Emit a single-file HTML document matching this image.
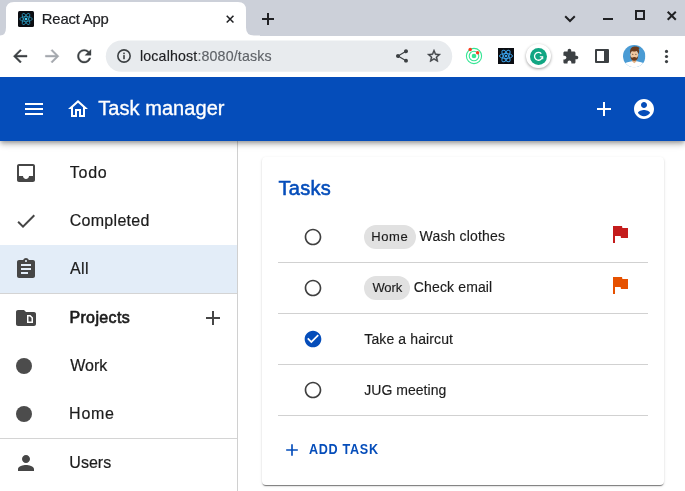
<!DOCTYPE html>
<html>
<head>
<meta charset="utf-8">
<title>React App</title>
<style>
*{box-sizing:border-box;margin:0;padding:0}
html,body{width:685px;height:491px;overflow:hidden;background:#fff;font-family:"Liberation Sans",sans-serif;color:#1f1f1f}
body{position:relative}
.abs{position:absolute}
svg{display:block;position:absolute;overflow:visible}
/* browser chrome */
#tabstrip{left:0;top:0;width:685px;height:36px;background:#ccd0d9}
#tab{left:0;top:0;width:260px;height:36px}
#tabtitle{top:10.8px;font-size:14.8px;line-height:16px;color:#202124;white-space:nowrap;-webkit-text-stroke:.2px #202124}
#toolbar{left:0;top:35.5px;width:685px;height:42px;background:#fff}
#pill{left:106px;top:41px;width:346px;height:30.5px;border-radius:15.25px;background:#eef0f4}
#url{top:48px;font-size:14.2px;line-height:16px;color:#202124;white-space:nowrap;-webkit-text-stroke:.15px}
#url span{color:#5f6368}
/* app */
#app{left:0;top:77px;width:685px;height:414px;overflow:hidden}
#appin{left:0;top:-77px;width:685px;height:491px}
#appbar{left:0;top:77px;width:685px;height:64px;background:#054dba;box-shadow:0 2px 4px -1px rgba(0,0,0,.28),0 4px 5px 0 rgba(0,0,0,.14),0 1px 10px 0 rgba(0,0,0,.12);z-index:5}
#apptitle{top:96.2px;font-size:20px;line-height:24px;color:#fff;white-space:nowrap;z-index:6;-webkit-text-stroke:.35px #fff}
.ab{z-index:6}
#drawer{left:0;top:141px;width:238px;height:350px;background:#fff;border-right:1px solid #d0d0d0}
.sel{left:0;top:245px;width:237px;height:48px;background:#e3edf8}
.hr{left:0;width:237px;height:1px;background:#d4d4d4}
.nav{font-size:16px;line-height:20px;color:#1c1c1c;white-space:nowrap;-webkit-text-stroke:.2px #1c1c1c}
#main{left:238px;top:141px;width:447px;height:350px;background:#fff}
#card{left:262px;top:157px;width:402px;height:328px;background:#fff;border-radius:4px;box-shadow:0 2px 1px -1px rgba(0,0,0,.38),0 1px 1px 0 rgba(0,0,0,.16),0 1px 3px 0 rgba(0,0,0,.13)}
#tasks{top:176.4px;font-size:20px;line-height:24px;color:#054dba;white-space:nowrap;-webkit-text-stroke:.55px #054dba}
.row{left:278px;width:370px;height:1px;background:#d1d1d1}
.t{font-size:14px;line-height:18px;color:#1c1c1c;white-space:nowrap;-webkit-text-stroke:.15px #1c1c1c}
.chip{height:24px;border-radius:12px;background:#e1e1e1;font-size:13px;line-height:24px;color:#1c1c1c;text-align:center;white-space:nowrap}
#add{top:440.4px;font-size:14px;line-height:18px;color:#054dba;white-space:nowrap;font-weight:bold;transform:scaleX(.9);transform-origin:0 0}
.ct{font-size:13px;line-height:24px;color:#1c1c1c;white-space:nowrap;-webkit-text-stroke:.15px #1c1c1c}
#txt{left:0;top:0;width:685px;height:491px;will-change:transform;z-index:10}
/*TUNE*/
#n1{left:69.80px;letter-spacing:0.759px}
#n2{left:69.66px;letter-spacing:0.298px}
#n3{left:69.90px;letter-spacing:0.499px}
#n4{left:69.39px;letter-spacing:0.371px}
#n5{left:70.32px;letter-spacing:-0.072px}
#n6{left:69.10px;letter-spacing:0.732px}
#n7{left:69.32px;letter-spacing:0.027px}
#t1{left:419.57px;letter-spacing:0.171px}
#t2{left:413.78px;letter-spacing:0.144px}
#t3{left:364.30px;letter-spacing:0.115px}
#t4{left:364.22px;letter-spacing:0.034px}
#c1{left:371.35px;letter-spacing:0.550px}
#c2{left:372.38px;letter-spacing:-0.074px}
#add{left:309.39px;letter-spacing:0.767px}
#tasks{left:278.51px;letter-spacing:0.263px}
#apptitle{left:98.14px;letter-spacing:0.072px}
#tabtitle{left:41.80px;letter-spacing:-0.166px}
#url{left:140.00px;letter-spacing:0.157px}
/*ENDTUNE*/
</style>
</head>
<body>
<!-- BROWSER -->
<div class="abs" id="tabstrip"></div>
<svg id="tab" viewBox="0 0 260 36"><path d="M0 36 L0 35.5 Q6 35.5 6 27.5 L6 10 Q6 2 14 2 L238 2 Q246 2 246 10 L246 27.5 Q246 35.5 254 35.5 L260 35.500 L260 36 Z" fill="#fff"/></svg>
<!-- favicon -->
<svg style="left:18px;top:11px" width="16" height="16" viewBox="0 0 16 16"><rect width="16" height="16" rx="1.5" fill="#0b0d12"/><g fill="none" stroke="#2b9fc6" stroke-width=".75"><ellipse cx="8" cy="8" rx="6.3" ry="2.4"/><ellipse cx="8" cy="8" rx="6.3" ry="2.4" transform="rotate(60 8 8)"/><ellipse cx="8" cy="8" rx="6.3" ry="2.4" transform="rotate(120 8 8)"/></g><circle cx="8" cy="8" r="1.35" fill="#45cdf5"/></svg>

<!-- tab close / new tab -->
<svg style="left:225.900px;top:14.800px" width="8.200" height="8.200" viewBox="0 0 9 9"><path d="M.8.8 8.2 8.2M8.2.8.8 8.2" stroke="#202124" stroke-width="1.7" fill="none"/></svg>
<svg style="left:261.5px;top:13px" width="12" height="12" viewBox="0 0 12 12"><path d="M6 0v12M0 6h12" stroke="#202124" stroke-width="2" fill="none"/></svg>
<!-- window controls -->
<svg style="left:564px;top:15px" width="12" height="8" viewBox="0 0 12 8"><path d="M1.2 1.3 6 6 10.8 1.3" stroke="#202124" stroke-width="2" fill="none"/></svg>
<div class="abs" style="left:603px;top:18px;width:10px;height:2px;background:#202124"></div>
<div class="abs" style="left:635px;top:10px;width:10px;height:10px;border:2px solid #202124"></div>
<svg style="left:667px;top:10.5px" width="9.5" height="9.5" viewBox="0 0 9.5 9.5"><path d="M.7.7 8.8 8.8M8.8.7.7 8.8" stroke="#202124" stroke-width="2" fill="none"/></svg>

<div class="abs" id="toolbar"></div>
<!-- nav buttons -->
<svg style="left:9.8px;top:45.7px" width="20.4" height="20.4" viewBox="0 0 24 24"><path d="M20 11H7.83l5.59-5.59L12 4l-8 8 8 8 1.41-1.41L7.83 13H20v-2z" fill="#3c4043" stroke="#3c4043" stroke-width=".5"/></svg>
<svg style="left:41.8px;top:45.7px" width="20.4" height="20.4" viewBox="0 0 24 24"><path d="M4 11h12.17l-5.59-5.59L12 4l8 8-8 8-1.41-1.41L16.17 13H4v-2z" fill="#a4a8ad" stroke="#a4a8ad" stroke-width=".5"/></svg>
<svg style="left:73.8px;top:45.7px" width="20.4" height="20.4" viewBox="0 0 24 24"><path d="M17.65 6.35C16.2 4.9 14.21 4 12 4c-4.42 0-7.99 3.58-7.99 8s3.57 8 7.99 8c3.73 0 6.84-2.55 7.73-6h-2.08c-.82 2.33-3.04 4-5.65 4-3.31 0-6-2.69-6-6s2.69-6 6-6c1.66 0 3.14.69 4.22 1.78L13 11h7V4l-2.35 2.35z" fill="#3c4043" stroke="#3c4043" stroke-width=".4"/></svg>
<svg style="left:100px;top:36px" width="360" height="40" viewBox="0 0 360 40"><rect x="5.800" y="4.600" width="346.400" height="31.100" rx="15.550" fill="#e8ebee"/></svg>
<!-- info icon -->
<svg style="left:116.100px;top:47.600px" width="16" height="16" viewBox="0 0 16 16"><circle cx="8" cy="8" r="6.150" fill="none" stroke="#3c4043" stroke-width="1.600"/><rect x="7.200" y="7.100" width="1.600" height="4.100" fill="#3c4043"/><rect x="7.200" y="4.600" width="1.600" height="1.600" fill="#3c4043"/></svg>

<!-- share -->
<svg style="left:394px;top:48px" width="16" height="16" viewBox="0 0 24 24"><path d="M18 16.08c-.76 0-1.44.3-1.96.77L8.91 12.7c.05-.23.09-.46.09-.7s-.04-.47-.09-.7l7.05-4.11c.54.5 1.25.81 2.04.81 1.66 0 3-1.34 3-3s-1.34-3-3-3-3 1.34-3 3c0 .24.04.47.09.7L8.04 9.81C7.5 9.31 6.79 9 6 9c-1.660 0-3 1.340-3 3s1.340 3 3 3c.79 0 1.500-.31 2.040-.81l7.120 4.160c-.05.21-.08.43-.08.650 0 1.610 1.310 2.920 2.920 2.920 1.610 0 2.920-1.310 2.920-2.920s-1.310-2.920-2.920-2.920z" fill="#3c4043"/></svg>
<!-- star -->
<svg style="left:426px;top:48px" width="16" height="16" viewBox="0 0 24 24"><path d="M22 9.240l-7.190-.62L12 2 9.190 8.630 2 9.240l5.460 4.730L5.820 21 12 17.270 18.180 21l-1.630-7.030L22 9.240zM12 15.400l-3.760 2.270 1-4.280-3.320-2.880 4.380-.38L12 6.100l1.710 4.040 4.380.38-3.320 2.880 1 4.280L12 15.400z" fill="#3c4043" stroke="#3c4043" stroke-width=".600"/></svg>
<!-- ext 1: green rings -->
<svg style="left:465px;top:47px" width="18" height="18" viewBox="0 0 18 18"><circle cx="9" cy="9" r="7.6" fill="none" stroke="#35e594" stroke-width="1.1"/><circle cx="9" cy="9" r="4.8" fill="none" stroke="#35e594" stroke-width="1.1"/><circle cx="9" cy="9" r="2.3" fill="#35e594"/><circle cx="5.2" cy="2.600" r="1.750" fill="#fb3b1e"/><circle cx="12.600" cy="5.800" r="1.700" fill="#fb3b1e"/></svg>
<!-- ext 2: react devtools -->
<svg style="left:498px;top:48px" width="16" height="16" viewBox="0 0 16 16"><rect width="16" height="16" fill="#0b0d12"/><g fill="none" stroke="#3aa0e8" stroke-width="1"><ellipse cx="8" cy="8" rx="6.5" ry="2.5"/><ellipse cx="8" cy="8" rx="6.5" ry="2.5" transform="rotate(60 8 8)"/><ellipse cx="8" cy="8" rx="6.5" ry="2.5" transform="rotate(120 8 8)"/></g><circle cx="8" cy="8" r="1.3" fill="#3aa0e8"/></svg>
<!-- grammarly -->
<div class="abs" style="left:526.200px;top:43.700px;width:24.800px;height:24.800px;border-radius:50%;background:#fff;box-shadow:0 1px 3px rgba(0,0,0,.38)"></div>
<svg style="left:530px;top:47.5px" width="17" height="17" viewBox="0 0 17 17"><circle cx="8.5" cy="8.500" r="8.500" fill="#11a683"/><path d="M12.300 8.700A3.900 3.900 0 1 1 11.300 5.700" fill="none" stroke="#fff" stroke-width="1.300"/><path d="M9.800 8.700h2.900v2.600" fill="none" stroke="#fff" stroke-width="1.100"/></svg>
<!-- puzzle -->
<svg style="left:561.500px;top:47.500px" width="17" height="17" viewBox="0 0 24 24"><path d="M20.500 11H19V7c0-1.100-.9-2-2-2h-4V3.500C13 2.120 11.880 1 10.500 1S8 2.120 8 3.500V5H4c-1.100 0-1.990.9-1.990 2v3.800H3.500c1.490 0 2.700 1.210 2.700 2.700s-1.210 2.700-2.700 2.700H2V20c0 1.100.9 2 2 2h3.800v-1.500c0-1.490 1.210-2.700 2.700-2.700 1.490 0 2.700 1.210 2.700 2.700V22H17c1.100 0 2-.9 2-2v-4h1.500c1.380 0 2.500-1.120 2.500-2.500S21.880 11 20.500 11z" fill="#3c4043"/></svg>
<!-- side panel -->
<div class="abs" style="left:595px;top:49px;width:14px;height:14px;border:2px solid #3c4043;border-right-width:5px;border-radius:1px"></div>
<!-- avatar -->
<svg style="left:622.800px;top:44.800px" width="22.400" height="22.400" viewBox="0 0 22.400 22.400"><defs><clipPath id="av"><circle cx="11.200" cy="11.200" r="11.200"/></clipPath></defs><g clip-path="url(#av)"><rect width="22.400" height="22.400" fill="#4a9bd4"/><path d="M0 23V18.900C3 17.500 6 16.600 8.800 16.200h5c2.800.4 5.800 1.300 8.600 2.700V23z" fill="#fff"/><path d="M9.300 13h4v3.600l-2 1.600-2-1.600z" fill="#e2b083"/><ellipse cx="11.300" cy="9.800" rx="3.900" ry="4.700" fill="#efc79f"/><path d="M7.200 9.200C6.300 4.500 8.500 1.800 11.500 1.600c2.300-.2 4.300.4 5.300 1.700-.6.100-1 .3-1.200.6.700 1.300.6 3.300.1 5.300-.5-1.600-1.100-2.600-2-3.300-1.600.6-3.600.7-5 .4-.8.700-1.300 1.700-1.500 2.900z" fill="#6a3b1c"/><path d="M7.300 10.200c.1 3.600 1.700 5.600 4 5.600s3.900-2 4-5.600c-.5 1.500-1 2.200-1.700 2.500-.7-.5-1.500-.7-2.300-.7s-1.600.2-2.300.7c-.7-.3-1.200-1-1.700-2.500z" fill="#6a3b1c"/><circle cx="9.800" cy="9.300" r=".55" fill="#3a2312"/><circle cx="12.900" cy="9.300" r=".55" fill="#3a2312"/></g></svg>
<!-- menu dots -->
<svg style="left:664px;top:49px" width="5" height="14" viewBox="0 0 5 14"><circle cx="2.500" cy="2.400" r="1.600" fill="#3c4043"/><circle cx="2.500" cy="7.500" r="1.600" fill="#3c4043"/><circle cx="2.500" cy="12.600" r="1.600" fill="#3c4043"/></svg>

<!-- APP -->
<div class="abs" id="app"><div class="abs" id="appin">
<div class="abs" id="main"></div>
<div class="abs" id="card"></div>
<div class="abs" id="drawer"></div>
<div class="abs sel"></div>
<div class="abs hr" style="top:293px"></div>
<div class="abs hr" style="top:438px"></div>







<!-- drawer icons -->
<svg style="left:14px;top:161px" width="24" height="24" viewBox="0 0 24 24"><path d="M19 3H4.990c-1.110 0-1.980.89-1.980 2L3 19c0 1.100.88 2 1.990 2H19c1.100 0 2-.9 2-2V5c0-1.110-.9-2-2-2zm0 12h-4c0 1.660-1.350 3-3 3s-3-1.340-3-3H4.990V5H19v10z" fill="#464646"/></svg>
<svg style="left:14px;top:209px" width="24" height="24" viewBox="0 0 24 24"><path d="M9 16.170 4.830 12l-1.420 1.410L9 19 21 7l-1.410-1.410z" fill="#464646"/></svg>
<svg style="left:14px;top:257px" width="24" height="24" viewBox="0 0 24 24"><path d="M19 3h-4.180C14.400 1.840 13.300 1 12 1c-1.300 0-2.400.84-2.820 2H5c-1.100 0-2 .9-2 2v14c0 1.100.9 2 2 2h14c1.100 0 2-.9 2-2V5c0-1.100-.9-2-2-2zm-7 0c.55 0 1 .45 1 1s-.45 1-1 1-1-.45-1-1 .45-1 1-1zm2 14H7v-2h7v2zm3-4H7v-2h10v2zm0-4H7V7h10v2z" fill="#464646"/></svg>
<svg style="left:14px;top:306px" width="24" height="24" viewBox="0 0 24 24"><path d="M15.880 10.500l1.620 1.620v3.380l-3 .01v-5h1.380zM22 8v10c0 1.100-.9 2-2 2H4c-1.100 0-2-.9-2-2L2.010 6C2.010 4.900 2.900 4 4 4h6l2 2h8c1.100 0 2 .9 2 2zm-3 3.500L16.500 9H13v8h6v-5.500z" fill="#464646"/></svg>
<svg style="left:201px;top:306px" width="24" height="24" viewBox="0 0 24 24"><path d="M19 13h-6v6h-2v-6H5v-2h6V5h2v6h6v2z" fill="#464646"/></svg>
<div class="abs" style="left:15.550px;top:357.550px;width:16.900px;height:16.900px;border-radius:50%;background:#4c4c4c"></div>
<div class="abs" style="left:15.550px;top:405.550px;width:16.900px;height:16.900px;border-radius:50%;background:#4c4c4c"></div>
<svg style="left:14px;top:451px" width="24" height="24" viewBox="0 0 24 24"><path d="M12 12c2.210 0 4-1.790 4-4s-1.790-4-4-4-4 1.790-4 4 1.790 4 4 4zm0 2c-2.670 0-8 1.340-8 4v2h16v-2c0-2.660-5.330-4-8-4z" fill="#464646"/></svg>

<div class="abs" id="appbar"></div>
<svg class="ab" style="left:22px;top:97px" width="24" height="24" viewBox="0 0 24 24"><path d="M3 18h18v-2H3v2zm0-5h18v-2H3v2zm0-7v2h18V6H3z" fill="#fff"/></svg>
<svg class="ab" style="left:66px;top:97px" width="24" height="24" viewBox="0 0 24 24"><path d="m12 5.690 5 4.500V18h-2v-6H9v6H7v-7.810l5-4.500M12 3 2 12h3v8h6v-6h2v6h6v-8h3L12 3z" fill="#fff"/></svg>

<svg class="ab" style="left:592px;top:97px" width="24" height="24" viewBox="0 0 24 24"><path d="M19 13h-6v6h-2v-6H5v-2h6V5h2v6h6v2z" fill="#fff"/></svg>
<svg class="ab" style="left:632px;top:97px" width="24" height="24" viewBox="0 0 24 24"><path d="M12 2C6.480 2 2 6.480 2 12s4.480 10 10 10 10-4.480 10-10S17.520 2 12 2zm0 3c1.660 0 3 1.340 3 3s-1.340 3-3 3-3-1.340-3-3 1.340-3 3-3zm0 14.200c-2.500 0-4.710-1.280-6-3.220.03-1.990 4-3.080 6-3.080 1.990 0 5.970 1.090 6 3.080-1.290 1.940-3.500 3.220-6 3.220z" fill="#fff"/></svg>


<div class="abs row" style="top:262px"></div>
<div class="abs row" style="top:313px"></div>
<div class="abs row" style="top:364px"></div>
<div class="abs row" style="top:415px"></div>
<!-- radios -->
<svg style="left:303px;top:227px" width="20" height="20" viewBox="0 0 24 24"><path d="M12 2C6.480 2 2 6.480 2 12s4.480 10 10 10 10-4.480 10-10S17.520 2 12 2zm0 18c-4.420 0-8-3.580-8-8s3.580-8 8-8 8 3.580 8 8-3.580 8-8 8z" fill="#404040"/></svg>
<svg style="left:303px;top:278px" width="20" height="20" viewBox="0 0 24 24"><path d="M12 2C6.480 2 2 6.480 2 12s4.480 10 10 10 10-4.480 10-10S17.520 2 12 2zm0 18c-4.420 0-8-3.580-8-8s3.580-8 8-8 8 3.580 8 8-3.580 8-8 8z" fill="#404040"/></svg>
<svg style="left:303px;top:329px" width="20" height="20" viewBox="0 0 24 24"><path d="M12 2C6.480 2 2 6.480 2 12s4.480 10 10 10 10-4.480 10-10S17.520 2 12 2zm-2 15-5-5 1.410-1.410L10 14.170l7.590-7.590L19 8l-9 9z" fill="#054dba"/></svg>
<svg style="left:303px;top:380px" width="20" height="20" viewBox="0 0 24 24"><path d="M12 2C6.480 2 2 6.480 2 12s4.480 10 10 10 10-4.480 10-10S17.520 2 12 2zm0 18c-4.420 0-8-3.580-8-8s3.580-8 8-8 8 3.580 8 8-3.580 8-8 8z" fill="#404040"/></svg>

<div class="abs chip" style="left:364px;top:225px;width:51.500px"></div>

<div class="abs chip" style="left:364px;top:276px;width:45.500px"></div>



<!-- flags -->
<svg style="left:608px;top:222px" width="24" height="24" viewBox="0 0 24 24"><path d="M14.400 6 14 4H5v17h2v-7h5.600l.4 2h7V6z" fill="#c41c1c"/></svg>
<svg style="left:608px;top:273px" width="24" height="24" viewBox="0 0 24 24"><path d="M14.400 6 14 4H5v17h2v-7h5.600l.4 2h7V6z" fill="#e65100"/></svg>
<!-- add task -->
<svg style="left:282px;top:440px" width="20" height="20" viewBox="0 0 24 24"><path d="M19 13h-6v6h-2v-6H5v-2h6V5h2v6h6v2z" fill="#054dba"/></svg>

</div></div>
<div class="abs" id="txt">
<div class="abs" id="tabtitle">React App</div>
<div class="abs" id="url">localhost<span>:8080/tasks</span></div>
<div class="abs nav" id="n1" style="top:163px">Todo</div>
<div class="abs nav" id="n2" style="top:211px">Completed</div>
<div class="abs nav" id="n3" style="top:259px">All</div>
<div class="abs nav" id="n4" style="top:307.6px;-webkit-text-stroke:.65px #1c1c1c">Projects</div>
<div class="abs nav" id="n5" style="top:356px">Work</div>
<div class="abs nav" id="n6" style="top:404px">Home</div>
<div class="abs nav" id="n7" style="top:453px">Users</div>
<div class="abs" id="apptitle">Task manager</div>
<div class="abs" id="tasks">Tasks</div>
<div class="abs ct" id="c1" style="top:225px">Home</div>
<div class="abs ct" id="c2" style="top:276px">Work</div>
<div class="abs t" id="t1" style="top:227px">Wash clothes</div>
<div class="abs t" id="t2" style="top:278px">Check email</div>
<div class="abs t" id="t3" style="top:330px">Take a haircut</div>
<div class="abs t" id="t4" style="top:381px">JUG meeting</div>
<div class="abs" id="add">ADD TASK</div>
</div>
</body>
</html>
